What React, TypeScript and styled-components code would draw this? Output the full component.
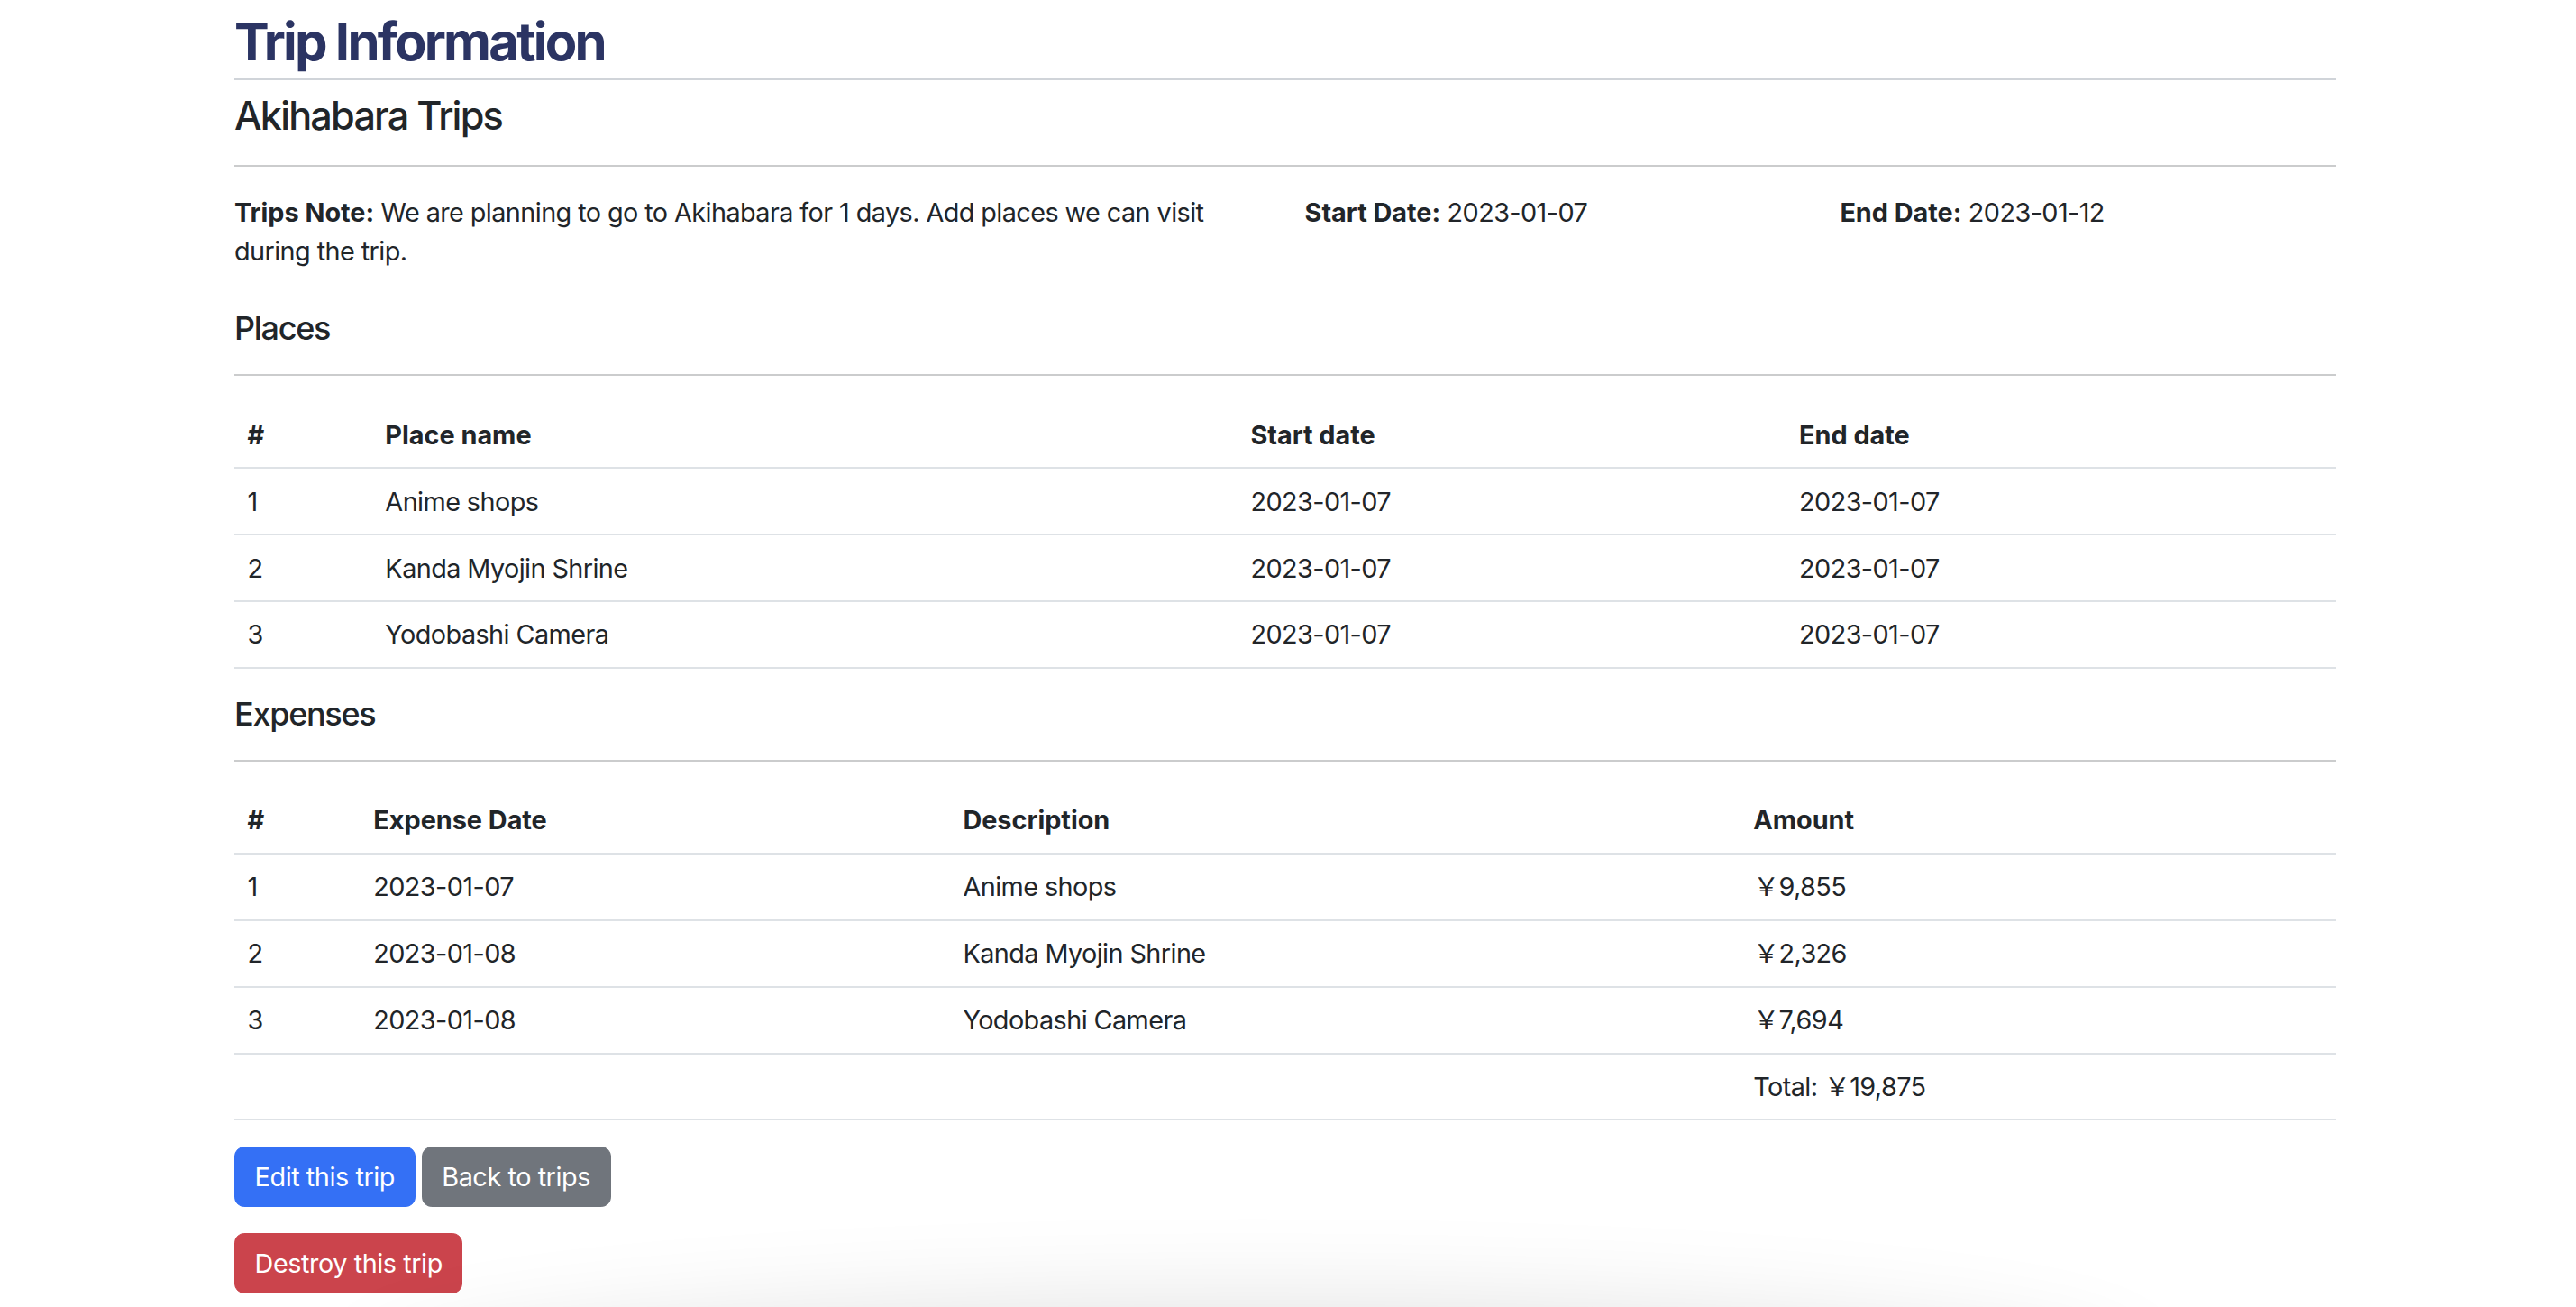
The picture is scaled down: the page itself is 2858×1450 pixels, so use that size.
import React from "react";
import styled, { createGlobalStyle } from "styled-components";

const GlobalStyle = createGlobalStyle`
  html, body { margin: 0; padding: 0; background: #ffffff; }
  body {
    font-family: Inter, "Noto Sans CJK JP", sans-serif;
    font-size: 28.8px;
    line-height: 1.5;
    letter-spacing: -0.02em;
    color: #212529;
    overflow: hidden;
  }
  strong { letter-spacing: 0; }
  * { box-sizing: border-box; }
`;

const Page = styled.main`
  width: 2332px;
  margin-left: 260px;
`;

const Title = styled.h1`
  margin: 12px 0 14px;
  padding-bottom: 4px;
  border-bottom: 3px solid #d0d4d9;
  font-size: 58px;
  line-height: 1.2;
  font-weight: 700;
  letter-spacing: -0.047em;
  color: #2b3463;
`;

const TripName = styled.h4`
  margin: 0;
  font-size: 43.2px;
  line-height: 1.2;
  font-weight: 500;
  letter-spacing: -0.042em;
`;

const Rule = styled.hr`
  margin: 28.8px 0;
  border: 0;
  border-top: 2px solid #cbcccd;
`;

const InfoGrid = styled.section`
  display: grid;
  grid-template-columns: calc(50% - 21.6px) minmax(0, 1fr) minmax(0, 1fr);
  column-gap: 43.2px;
  margin-bottom: 43px;
`;

const InfoText = styled.p`
  margin: 0;
`;

const SectionTitle = styled.h5`
  margin: 0;
  font-size: 36px;
  line-height: 1.2;
  font-weight: 500;
  letter-spacing: -0.036em;
`;

const Table = styled.table`
  width: 100%;
  border-collapse: collapse;
  margin-bottom: 28.8px;
`;

const HeadCell = styled.th<{ $w: number }>`
  width: ${(p) => p.$w}%;
  padding: 14.4px;
  text-align: left;
  font-weight: 700;
  letter-spacing: 0;
  border-bottom: 2px solid #dee2e6;
`;

const Cell = styled.td`
  padding: 14.4px;
  text-align: left;
  border-bottom: 2px solid #dee2e6;
`;

const Actions = styled.div`
  display: flex;
  flex-direction: column;
  align-items: flex-start;
  gap: 28.8px;
`;

const ButtonRow = styled.div`
  display: flex;
  gap: 7px;
`;

const variants: Record<string, string> = {
  primary: "#3470f5",
  secondary: "#70757c",
  danger: "#cb444c",
};

const Button = styled.button<{ $variant: "primary" | "secondary" | "danger" }>`
  padding: 10.8px 21.6px;
  border: 1.8px solid ${(p) => variants[p.$variant]};
  border-radius: 10.8px;
  background: ${(p) => variants[p.$variant]};
  color: #ffffff;
  font-family: inherit;
  font-size: 28.8px;
  line-height: 1.5;
  font-weight: 400;
  letter-spacing: -0.015em;
  cursor: pointer;
`;

const BottomShade = styled.div`
  position: fixed;
  left: 440px;
  width: 1900px;
  top: 1485px;
  height: 120px;
  border-radius: 50%;
  box-shadow: 0 0 110px 36px rgba(0, 0, 0, 0.12);
  pointer-events: none;
`;

const places = [
  { name: "Anime shops", start: "2023-01-07", end: "2023-01-07" },
  { name: "Kanda Myojin Shrine", start: "2023-01-07", end: "2023-01-07" },
  { name: "Yodobashi Camera", start: "2023-01-07", end: "2023-01-07" },
];

const expenses = [
  { date: "2023-01-07", desc: "Anime shops", amount: "￥9,855" },
  { date: "2023-01-08", desc: "Kanda Myojin Shrine", amount: "￥2,326" },
  { date: "2023-01-08", desc: "Yodobashi Camera", amount: "￥7,694" },
];

export default function App() {
  return (
    <>
      <GlobalStyle />
      <Page>
        <Title>Trip Information</Title>
        <TripName>Akihabara Trips</TripName>
        <Rule />
        <InfoGrid>
          <InfoText>
            <strong>Trips Note:</strong> We are planning to go to Akihabara for 1 days. Add places we can visit during the trip.
          </InfoText>
          <InfoText>
            <strong>Start Date:</strong> 2023-01-07
          </InfoText>
          <InfoText>
            <strong>End Date:</strong> 2023-01-12
          </InfoText>
        </InfoGrid>

        <SectionTitle>Places</SectionTitle>
        <Rule />
        <Table>
          <thead>
            <tr>
              <HeadCell $w={6.56}>#</HeadCell>
              <HeadCell $w={41.17}>Place name</HeadCell>
              <HeadCell $w={26.1}>Start date</HeadCell>
              <HeadCell $w={26.17}>End date</HeadCell>
            </tr>
          </thead>
          <tbody>
            {places.map((p, i) => (
              <tr key={p.name}>
                <Cell>{i + 1}</Cell>
                <Cell>{p.name}</Cell>
                <Cell>{p.start}</Cell>
                <Cell>{p.end}</Cell>
              </tr>
            ))}
          </tbody>
        </Table>

        <SectionTitle>Expenses</SectionTitle>
        <Rule />
        <Table>
          <thead>
            <tr>
              <HeadCell $w={6.0}>#</HeadCell>
              <HeadCell $w={28.05}>Expense Date</HeadCell>
              <HeadCell $w={37.6}>Description</HeadCell>
              <HeadCell $w={28.35}>Amount</HeadCell>
            </tr>
          </thead>
          <tbody>
            {expenses.map((e, i) => (
              <tr key={e.desc}>
                <Cell>{i + 1}</Cell>
                <Cell>{e.date}</Cell>
                <Cell>{e.desc}</Cell>
                <Cell>{e.amount}</Cell>
              </tr>
            ))}
            <tr>
              <Cell />
              <Cell />
              <Cell />
              <Cell>Total: ￥19,875</Cell>
            </tr>
          </tbody>
        </Table>

        <Actions>
          <ButtonRow>
            <Button $variant="primary">Edit this trip</Button>
            <Button $variant="secondary">Back to trips</Button>
          </ButtonRow>
          <Button $variant="danger">Destroy this trip</Button>
        </Actions>
      </Page>
      <BottomShade />
    </>
  );
}
